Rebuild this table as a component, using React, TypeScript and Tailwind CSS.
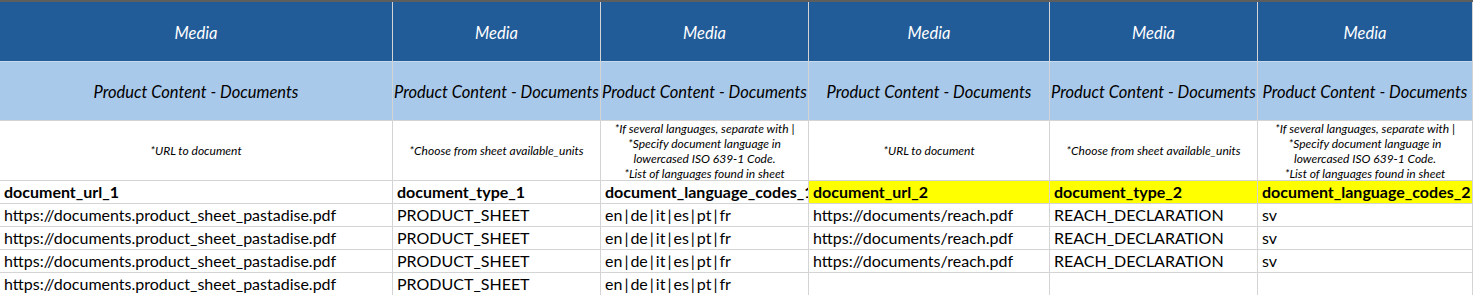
import React from 'react';

const cols = ['w-[393px]', 'w-[208px]', 'w-[208px]', 'w-[241px]', 'w-[208px]', 'w-[215px]'];

const urlNote = ['*URL to document'];
const typeNote = ['*Choose from sheet available_units'];
const langNote = [
  '*If several languages, separate with |',
  '*Specify document language in',
  'lowercased ISO 639-1 Code.',
  '*List of languages found in sheet',
];

const notes = [urlNote, typeNote, langNote, urlNote, typeNote, langNote];

const fields = [
  'document_url_1',
  'document_type_1',
  'document_language_codes_1',
  'document_url_2',
  'document_type_2',
  'document_language_codes_2',
];

const full = [
  'https://documents.product_sheet_pastadise.pdf',
  'PRODUCT_SHEET',
  'en|de|it|es|pt|fr',
  'https://documents/reach.pdf',
  'REACH_DECLARATION',
  'sv',
];

const rows = [full, full, full, [full[0], full[1], full[2], '', '', '']];

const cell = 'shrink-0 border-r border-b border-[#d4d4d4] overflow-hidden whitespace-nowrap';

// Calibri puts air around the pipe; give it a little margin
function Codes({ text }: { text: string }) {
  const parts = text.split('|');
  return (
    <>
      {parts.map((p, i) => (
        <React.Fragment key={i}>
          {i > 0 && <span className="mx-[2px]">|</span>}
          {p}
        </React.Fragment>
      ))}
    </>
  );
}

export default function App() {
  return (
    <div className="w-[1473px] h-[295px] overflow-hidden bg-white text-black font-['Lato',sans-serif]">
      <div className="h-[2px] bg-[#5e5e5e]" />

      {/* group header */}
      <div className="flex">
        {cols.map((w, i) => (
          <div key={i} className={`${cell} ${w} h-[60px] pt-[3px] bg-[#215b98] border-b-[#c9d9ec] flex items-center justify-center text-[16.5px] italic text-white`}>
            Media
          </div>
        ))}
      </div>

      {/* section header */}
      <div className="flex">
        {cols.map((w, i) => (
          <div key={i} className={`${cell} ${w} h-[59px] pt-[2px] bg-[#a9c9eb] flex items-center justify-center text-[16.5px] italic`}>
            Product Content - Documents
          </div>
        ))}
      </div>

      {/* notes */}
      <div className="flex">
        {cols.map((w, i) => (
          <div key={i} className={`${cell} ${w} h-[60px] flex flex-col items-center justify-center text-[12px] leading-[15px] italic`}>
            {notes[i].map((line) => (
              <span key={line}>{line}</span>
            ))}
          </div>
        ))}
      </div>

      {/* field names */}
      <div className="flex">
        {cols.map((w, i) => (
          <div key={i} className={`${cell} ${w} h-[23px] px-[4px] flex items-center text-[16px] font-bold ${i >= 3 ? 'bg-[#ffff00]' : ''}`}>
            {fields[i]}
          </div>
        ))}
      </div>

      {/* data */}
      {rows.map((r, ri) => (
        <div key={ri} className="flex">
          {cols.map((w, i) => (
            <div key={i} className={`${cell} ${w} h-[23px] px-[4px] flex items-center text-[16px]`}>
              {i === 2 ? <Codes text={r[i]} /> : r[i]}
            </div>
          ))}
        </div>
      ))}
    </div>
  );
}
